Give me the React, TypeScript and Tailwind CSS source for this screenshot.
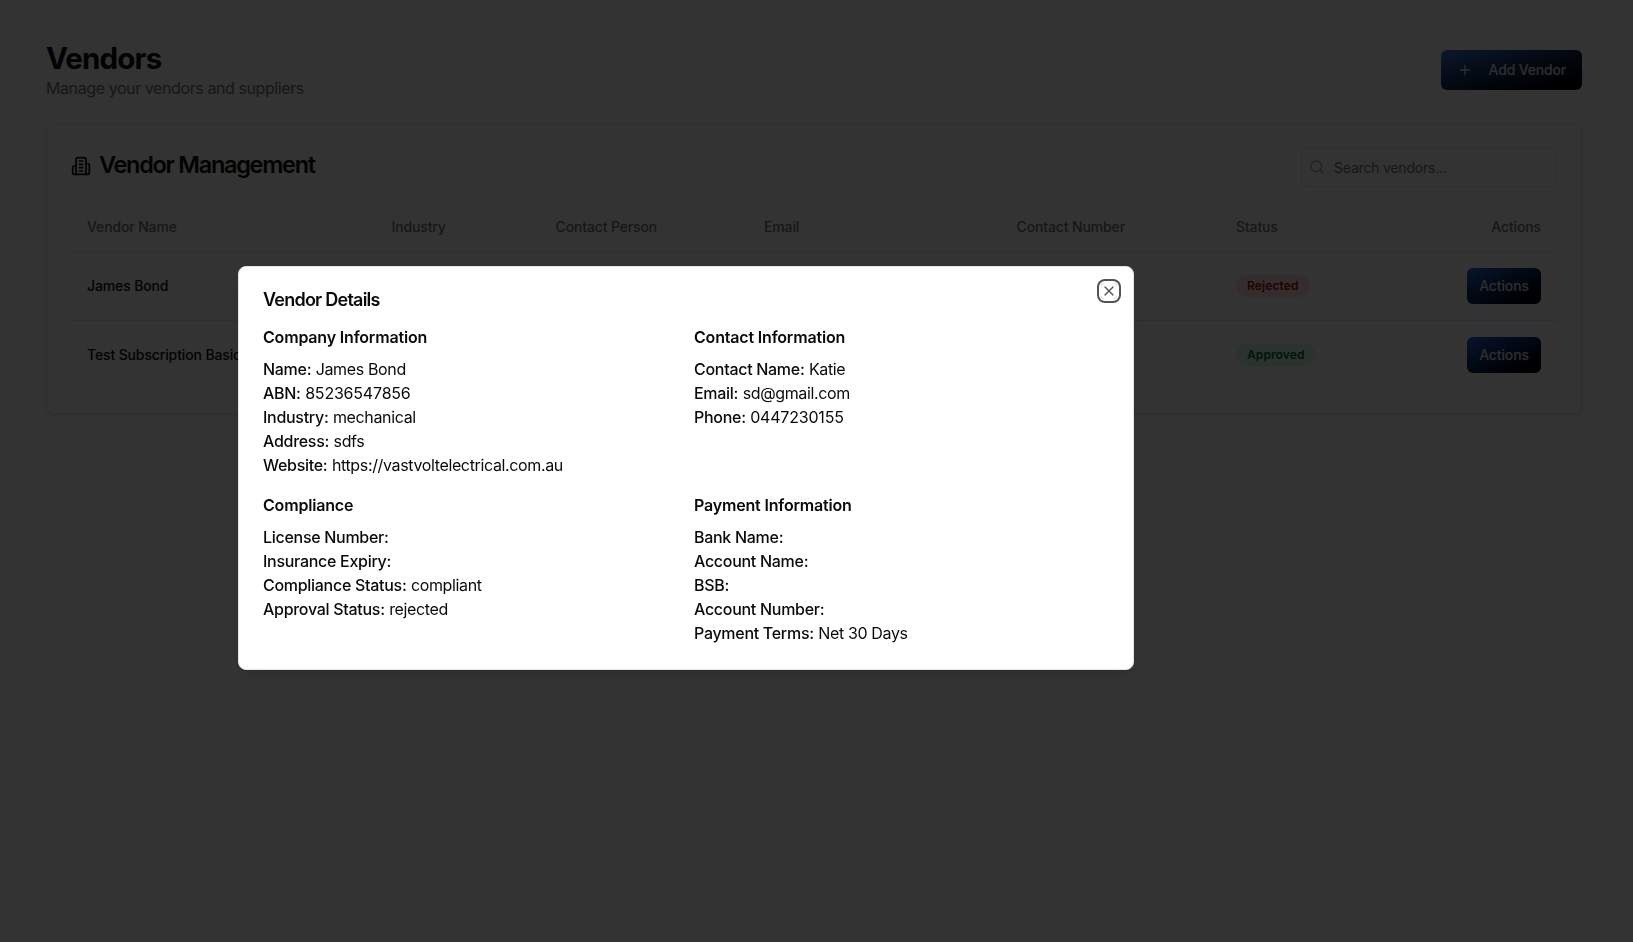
import { Plus, Search, X } from "lucide-react";
import type { ReactNode } from "react";

function BuildingIcon() {
  return (
    <svg className="mt-0.5" width="20" height="20" viewBox="0 0 24 24" fill="none" stroke="currentColor" strokeWidth="2" strokeLinecap="round" strokeLinejoin="round">
      <path d="M6 22V4a2 2 0 0 1 2-2h8a2 2 0 0 1 2 2v18Z" />
      <path d="M6 12H4a2 2 0 0 0-2 2v6a2 2 0 0 0 2 2h2" />
      <path d="M18 9h2a2 2 0 0 1 2 2v9a2 2 0 0 1-2 2h-2" />
      <path d="M10 6h4" />
      <path d="M10 10h4" />
      <path d="M10 14h4" />
      <path d="M10 18h4" />
    </svg>
  );
}

const grid = "grid grid-cols-[304.5px_164px_208.5px_252.5px_219.5px_1fr_120px]";

const vendors = [
  { name: "James Bond", industry: "mechanical", person: "Katie", email: "sd@gmail.com", phone: "0447230155", status: "Rejected", tone: "bg-red-100 text-red-800" },
  { name: "Test Subscription Basic", industry: "", person: "", email: "", phone: "", status: "Approved", tone: "bg-green-100 text-green-800" },
];

function Line({ label, value = "", numeric = false }: { label: string; value?: string; numeric?: boolean }) {
  return (
    <p className="whitespace-nowrap">
      <span className="font-medium tracking-[-0.29px]">{label}:</span>{" "}
      <span className={numeric ? "tracking-[-0.2px]" : "tracking-[-0.36px]"}>{value}</span>
    </p>
  );
}

function Section({ title, children }: { title: string; children: ReactNode }) {
  return (
    <section>
      <h3 className="mb-2 font-semibold tracking-[-0.18px]">{title}</h3>
      {children}
    </section>
  );
}

export default function App() {
  return (
    <div className="h-[942px] w-full overflow-hidden bg-white font-['Inter',sans-serif] text-[#0c0a09]">
      <main className="pt-10 pr-[51px] pl-[46px]">
        <header className="mb-6 flex items-center justify-between">
          <div>
            <h1 className="text-[29.5px] leading-9 font-bold tracking-[-0.85px]">Vendors</h1>
            <p className="tracking-[-0.41px] text-[#71717a]">Manage your vendors and suppliers</p>
          </div>
          <button className="flex h-10 items-center gap-4 rounded-md bg-linear-to-br from-[#3b78d8] to-black px-4 text-sm font-medium tracking-[-0.18px] text-[#e4e4e7]">
            <Plus size={16} />
            Add Vendor
          </button>
        </header>

        <div className="rounded-lg border border-[#e4e4e7] px-6 pb-6 shadow-sm">
          <div className="flex items-start justify-between pt-[22px] pb-4">
            <h2 className="flex items-center gap-2 pt-1.5 text-[23.5px] leading-6 font-semibold tracking-[-1.28px]">
              <BuildingIcon />
              Vendor Management
            </h2>
            <div className="flex h-10 w-64 items-center gap-[9px] rounded-md border border-[#e4e4e7] pl-[7px] text-sm text-[#71717a]">
              <Search size={16} className="opacity-60" />
              <span className="pt-0.5 tracking-[-0.2px]">Search vendors...</span>
            </div>
          </div>

          <div className="text-sm tracking-[-0.13px]">
            <div className={`${grid} h-[49px] items-center border-b border-[#e4e4e7] font-medium text-[#71717a]`}>
              <span className="px-4">Vendor Name</span>
              <span className="px-4">Industry</span>
              <span className="px-4">Contact Person</span>
              <span className="px-4">Email</span>
              <span className="px-4">Contact Number</span>
              <span className="px-4">Status</span>
              <span className="px-4 text-right">Actions</span>
            </div>
            {vendors.map((v) => (
              <div key={v.name} className={`${grid} h-[69px] items-center border-b border-[#e4e4e7] last:h-[68px] last:border-0`}>
                <span className="px-4 font-medium whitespace-nowrap">{v.name}</span>
                <span className="px-4">{v.industry}</span>
                <span className="px-4">{v.person}</span>
                <span className="px-4">{v.email}</span>
                <span className="px-4">{v.phone}</span>
                <span className="flex px-4">
                  <span className={`flex h-[22px] items-center rounded-full px-[11px] text-xs font-semibold tracking-[0.1px] ${v.tone}`}>{v.status}</span>
                </span>
                <span className="flex justify-end px-4">
                  <button className="h-9 w-[74px] rounded-md bg-linear-to-br from-[#266ae0] to-black text-sm font-medium tracking-[-0.13px] text-[#e4e4e7]">Actions</button>
                </span>
              </div>
            ))}
          </div>
        </div>
      </main>

      <div className="fixed inset-0 bg-black/80 pt-[266px] pl-[238px]">
        <div role="dialog" className="relative flex w-4xl flex-col gap-4 rounded-lg border border-[#e4e4e7] bg-white p-6 shadow-lg">
          <h2 className="text-lg leading-[18px] font-semibold tracking-[-0.76px]">Vendor Details</h2>
          <div className="grid grid-cols-2 gap-4">
            <Section title="Company Information">
              <Line label="Name" value="James Bond" />
              <Line label="ABN" value="85236547856" numeric />
              <Line label="Industry" value="mechanical" />
              <Line label="Address" value="sdfs" />
              <Line label="Website" value="https://vastvoltelectrical.com.au" />
            </Section>
            <Section title="Contact Information">
              <Line label="Contact Name" value="Katie" />
              <Line label="Email" value="sd@gmail.com" />
              <Line label="Phone" value="0447230155" numeric />
            </Section>
            <Section title="Compliance">
              <Line label="License Number" />
              <Line label="Insurance Expiry" />
              <Line label="Compliance Status" value="compliant" />
              <Line label="Approval Status" value="rejected" />
            </Section>
            <Section title="Payment Information">
              <Line label="Bank Name" />
              <Line label="Account Name" />
              <Line label="BSB" />
              <Line label="Account Number" />
              <Line label="Payment Terms" value="Net 30 Days" />
            </Section>
          </div>
          <button aria-label="Close" className="absolute top-4 right-4 rounded-sm opacity-70 ring-2 ring-[#0c0a09] ring-offset-2 ring-offset-white">
            <X size={16} />
          </button>
        </div>
      </div>
    </div>
  );
}
